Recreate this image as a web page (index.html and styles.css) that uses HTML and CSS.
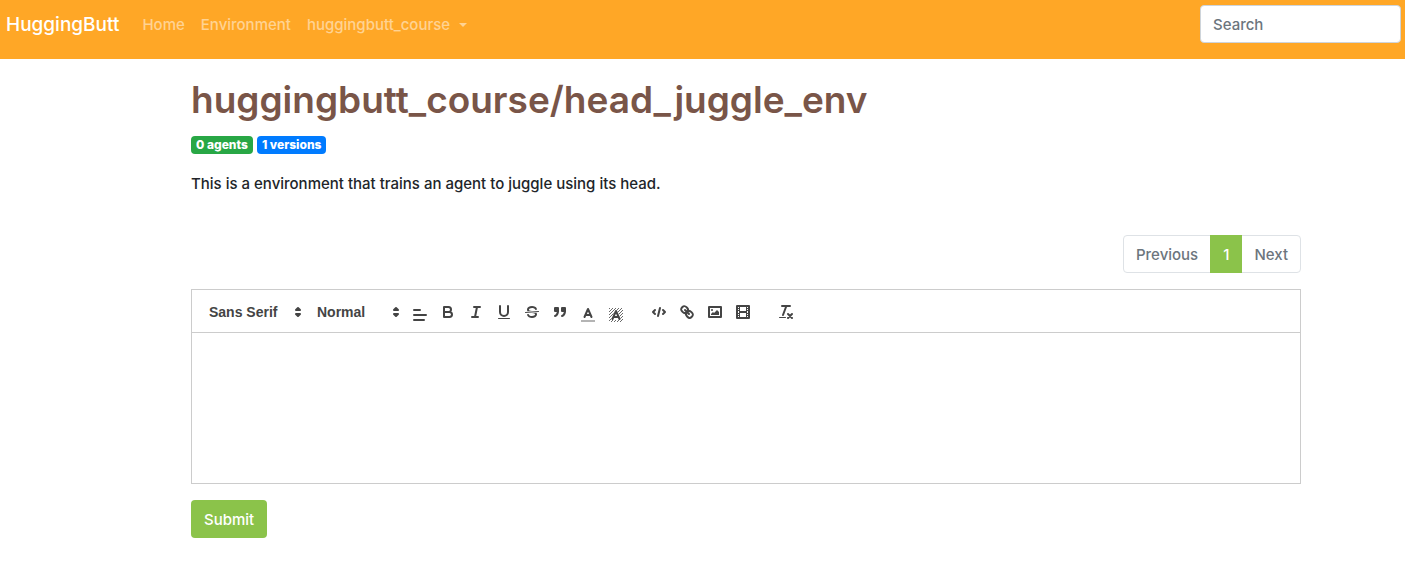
FILE: index.html
```html
<!DOCTYPE html>
<html lang="en">
<head>
<meta charset="utf-8">
<title>huggingbutt_course/head_juggle_env</title>
<link rel="stylesheet" href="styles.css">
</head>
<body>
<nav class="navbar">
  <a class="brand" href="#">HuggingButt</a>
  <div class="nav-links">
    <a class="nav-link" href="#">Home</a>
    <a class="nav-link" href="#">Environment</a>
    <button class="nav-link nav-toggle" type="button">huggingbutt_course</button>
  </div>
  <form class="search"><input class="search-input" type="search" placeholder="Search" aria-label="Search"></form>
</nav>
<main class="content">
  <h1 class="title">huggingbutt_course/head_juggle_env</h1>
  <div class="badges"><span class="badge badge-agents">0 agents</span><span class="badge badge-versions">1 versions</span></div>
  <p class="description">This is a environment that trains an agent to juggle using its head.</p>
  <nav class="pagination" aria-label="Pages">
    <a class="page" href="#">Previous</a>
    <a class="page page-active" href="#" aria-current="page">1</a>
    <a class="page" href="#">Next</a>
  </nav>
  <form class="comment">
    <div class="editor">
      <div class="toolbar">
        <div class="group">
          <div class="picker picker-font">
            <select class="picker-select" aria-label="Font"><option>Sans Serif</option></select>
            <svg class="icon picker-arrow" viewBox="0 0 18 18"><polygon class="s f" points="7 11 9 13 11 11 7 11"/><polygon class="s f" points="7 7 9 5 11 7 7 7"/></svg>
          </div>
          <div class="picker picker-size">
            <select class="picker-select" aria-label="Heading"><option>Normal</option></select>
            <svg class="icon picker-arrow" viewBox="0 0 18 18"><polygon class="s f" points="7 11 9 13 11 11 7 11"/><polygon class="s f" points="7 7 9 5 11 7 7 7"/></svg>
          </div>
          <button class="tool tool-picker" type="button" aria-label="Align"><svg class="icon" viewBox="0 0 18 18"><path class="s" d="M3 9H15M3 14H13M3 4H9"/></svg></button>
          <button class="tool" type="button" aria-label="Bold"><svg class="icon" viewBox="0 0 18 18"><path class="s" d="M5,4H9.5A2.5,2.5,0,0,1,9.5,9H5ZM5,9h5.5A2.5,2.5,0,0,1,10.5,14H5Z"/></svg></button>
          <button class="tool" type="button" aria-label="Italic"><svg class="icon" viewBox="0 0 18 18"><path class="s" d="M7 4H13M5 14H11M8 14L10 4"/></svg></button>
          <button class="tool" type="button" aria-label="Underline"><svg class="icon" viewBox="0 0 18 18"><path class="s" d="M5,3V9a4.012,4.012,0,0,0,4,4H9a4.012,4.012,0,0,0,4-4V3"/><rect class="f" height="1" rx=".5" width="12" x="3" y="15"/></svg></button>
          <button class="tool" type="button" aria-label="Strike"><svg class="icon" viewBox="0 0 18 18"><path class="s thin" d="M15.5 8.5L2.5 9.5"/><path class="f" d="M9.007,8C6.542,7.791,6,7.519,6,6.5,6,5.792,7.283,5,9,5c1.571,0,2.765.679,2.969,1.309a1,1,0,0,0,1.9-.617C13.356,4.106,11.354,3,9,3,6.2,3,4,4.538,4,6.5a3.2,3.2,0,0,0,.5,1.843Z"/><path class="f" d="M8.984,10C11.457,10.208,12,10.479,12,11.5c0,.708-1.283,1.5-3,1.5-1.571,0-2.765-.679-2.969-1.309a1,1,0,1,0-1.9.617C4.644,13.894,6.646,15,9,15c2.8,0,5-1.538,5-3.5a3.2,3.2,0,0,0-.5-1.843Z"/></svg></button>
          <button class="tool" type="button" aria-label="Quote"><svg class="icon" viewBox="0 0 18 18"><rect class="s f" height="3" width="3" x="4" y="5"/><rect class="s f" height="3" width="3" x="11" y="5"/><path class="s f" d="M7,8c0,4.031-3,5-3,5"/><path class="s f" d="M14,8c0,4.031-3,5-3,5"/></svg></button>
          <button class="tool tool-picker" type="button" aria-label="Text color"><svg class="icon" viewBox="0 0 18 18"><path class="s faint" d="M2 15H16"/><path class="s" d="M5.5 11L9 3L12.5 11M11.63 9H6.38"/></svg></button>
          <button class="tool tool-picker" type="button" aria-label="Background color"><svg class="icon" viewBox="0 0 18 18"><defs><clipPath id="area"><path d="M2 2H16V16H2Z"/></clipPath></defs><path class="s hatch" clip-path="url(#area)" d="M1 4L4 1M1 7L7 1M1 10L10 1M1 13L13 1M1 16L16 1M2 18L18 2M5 18L18 5M8 18L18 8M11 18L18 11M14 18L18 14"/><path class="halo" d="M4 14L8 4H10L14 14Z"/><path class="s" d="M5.5 13L9 5L12.5 13M11.63 11H6.38"/></svg></button>
        </div>
        <div class="group">
          <button class="tool" type="button" aria-label="Code"><svg class="icon" viewBox="0 0 18 18"><path class="s" d="M5 7L3 9L5 11M13 7L15 9L13 11M10 5L8 13"/></svg></button>
          <button class="tool" type="button" aria-label="Link"><svg class="icon" viewBox="0 0 18 18"><path class="s" d="M7 7L11 11M8.9,4.577a3.476,3.476,0,0,1,.36,4.679A3.476,3.476,0,0,1,4.577,8.9C3.185,7.5,2.035,6.4,4.217,4.217S7.5,3.185,8.9,4.577ZM13.423,9.1a3.476,3.476,0,0,0-4.679-.36,3.476,3.476,0,0,0,.36,4.679c1.392,1.392,2.5,2.542,4.679.36S14.815,10.5,13.423,9.1Z"/></svg></button>
          <button class="tool" type="button" aria-label="Image"><svg class="icon" viewBox="0 0 18 18"><rect class="s" height="10" width="12" x="3" y="4"/><circle class="f" cx="6" cy="7" r="1"/><path class="f" d="M5 12V11L7 9L8 10L11 7L13 9V12Z"/></svg></button>
          <button class="tool" type="button" aria-label="Video"><svg class="icon" viewBox="0 0 18 18"><rect class="s" height="12" width="12" x="3" y="3"/><path class="f" d="M5 3h1v12h-1zM12 3h1v12h-1zM5 8h8v2h-8zM3 5h3v1h-3zM3 7h3v1h-3zM3 10h3v1h-3zM3 12h3v1h-3zM12 5h3v1h-3zM12 7h3v1h-3zM12 10h3v1h-3zM12 12h3v1h-3z"/></svg></button>
        </div>
        <div class="group">
          <button class="tool" type="button" aria-label="Clear formatting"><svg class="icon" viewBox="0 0 18 18"><path class="s" d="M5 3H13M6 12L9.35 3M11 11L15 15M15 11L11 15"/><rect class="f" height="1" rx=".5" width="7" x="2" y="14"/></svg></button>
        </div>
      </div>
      <textarea class="editor-text" aria-label="Comment"></textarea>
    </div>
    <button class="submit" type="submit">Submit</button>
  </form>
</main>
</body>
</html>
```
FILE: styles.css
```css
* { box-sizing: border-box; }
body {
  margin: 0;
  background: #fff;
  color: #212529;
  font: 450 15px/24px Inter, "Liberation Sans", sans-serif;
}
button, input, select, textarea { font: inherit; margin: 0; }
a { text-decoration: none; }

.navbar {
  display: flex;
  align-items: center;
  padding: 5px 4px 16px 6px;
  background: #ffa726;
}
.brand { margin-right: 15px; padding-top: 1px; color: #fff; font-size: 19px; line-height: 30px; }
.nav-links { display: flex; flex: 1; }
.nav-link { padding: 8px 8px 6px; color: rgba(255, 255, 255, .5); }
.nav-toggle {
  display: flex;
  align-items: center;
  gap: 9px;
  border: 0;
  background: none;
}
.nav-toggle::after {
  content: "";
  border: 4px solid transparent;
  border-top-color: currentColor;
  border-bottom: 0;
}
.search-input {
  display: block;
  width: 201px;
  height: 38px;
  padding: 6px 12px;
  border: 1px solid #ced4da;
  border-radius: 4px;
  background: #fff;
}
.search-input::placeholder { color: #6c757d; opacity: 1; }

.content { padding: 17px 104px 24px 191px; }
.title { margin: 0 0 8px; color: #795548; font-size: 37px; font-weight: 600; line-height: 48px; }
.badges { display: flex; gap: 4px; padding: 4px 0; }
.badge {
  padding: 3px 5px;
  border-radius: 4px;
  color: #fff;
  font-size: 12px;
  font-weight: 800;
  line-height: 12px;
}
.badge-agents { background: #28a745; }
.badge-versions { background: #007bff; }
.description { margin: 14px 0 39px; }

.pagination { display: flex; justify-content: flex-end; margin-bottom: 16px; }
.page {
  margin-left: -1px;
  padding: 7px 12px 5px;
  border: 1px solid #dee2e6;
  color: #6c757d;
}
.page:first-child { border-radius: 4px 0 0 4px; }
.page:last-child { border-radius: 0 4px 4px 0; }
.page-active { z-index: 1; border-color: #8bc34a; background: #8bc34a; color: #fff; }

.editor { margin-bottom: 16px; border: 1px solid #ccc; }
.toolbar { display: flex; gap: 15px; padding: 8px; border-bottom: 1px solid #ccc; }
.group { display: flex; align-items: flex-end; height: 26px; }
.picker { position: relative; height: 24px; }
.picker-font { width: 108px; }
.picker-size { width: 98px; }
.picker-select {
  display: block;
  width: 100%;
  height: 24px;
  padding: 0 20px 0 9px;
  border: 0;
  appearance: none;
  background: none;
  color: #444;
  font: 700 14px/24px "Liberation Sans", sans-serif;
}
.picker-arrow { position: absolute; top: 3px; right: 1px; pointer-events: none; }
.tool { width: 28px; height: 24px; padding: 3px 5px; border: 0; background: none; }
.tool-picker { padding: 6px 5px 0; }
.icon { display: block; width: 18px; height: 18px; }
.s { fill: none; stroke: #444; stroke-width: 2; stroke-linecap: round; stroke-linejoin: round; }
.s.f, .f { fill: #444; }
.s.thin { stroke-width: 1; }
.faint { opacity: .4; stroke-linecap: butt; }
.s.hatch { stroke-width: .8; }
.halo { fill: #fff; }
.editor-text {
  display: block;
  width: 100%;
  height: 150px;
  padding: 12px 15px;
  border: 0;
  outline: 0;
  resize: none;
}
.submit {
  padding: 8px 13px 6px;
  border: 0;
  border-radius: 4px;
  background: #8bc34a;
  color: #fff;
}
```
